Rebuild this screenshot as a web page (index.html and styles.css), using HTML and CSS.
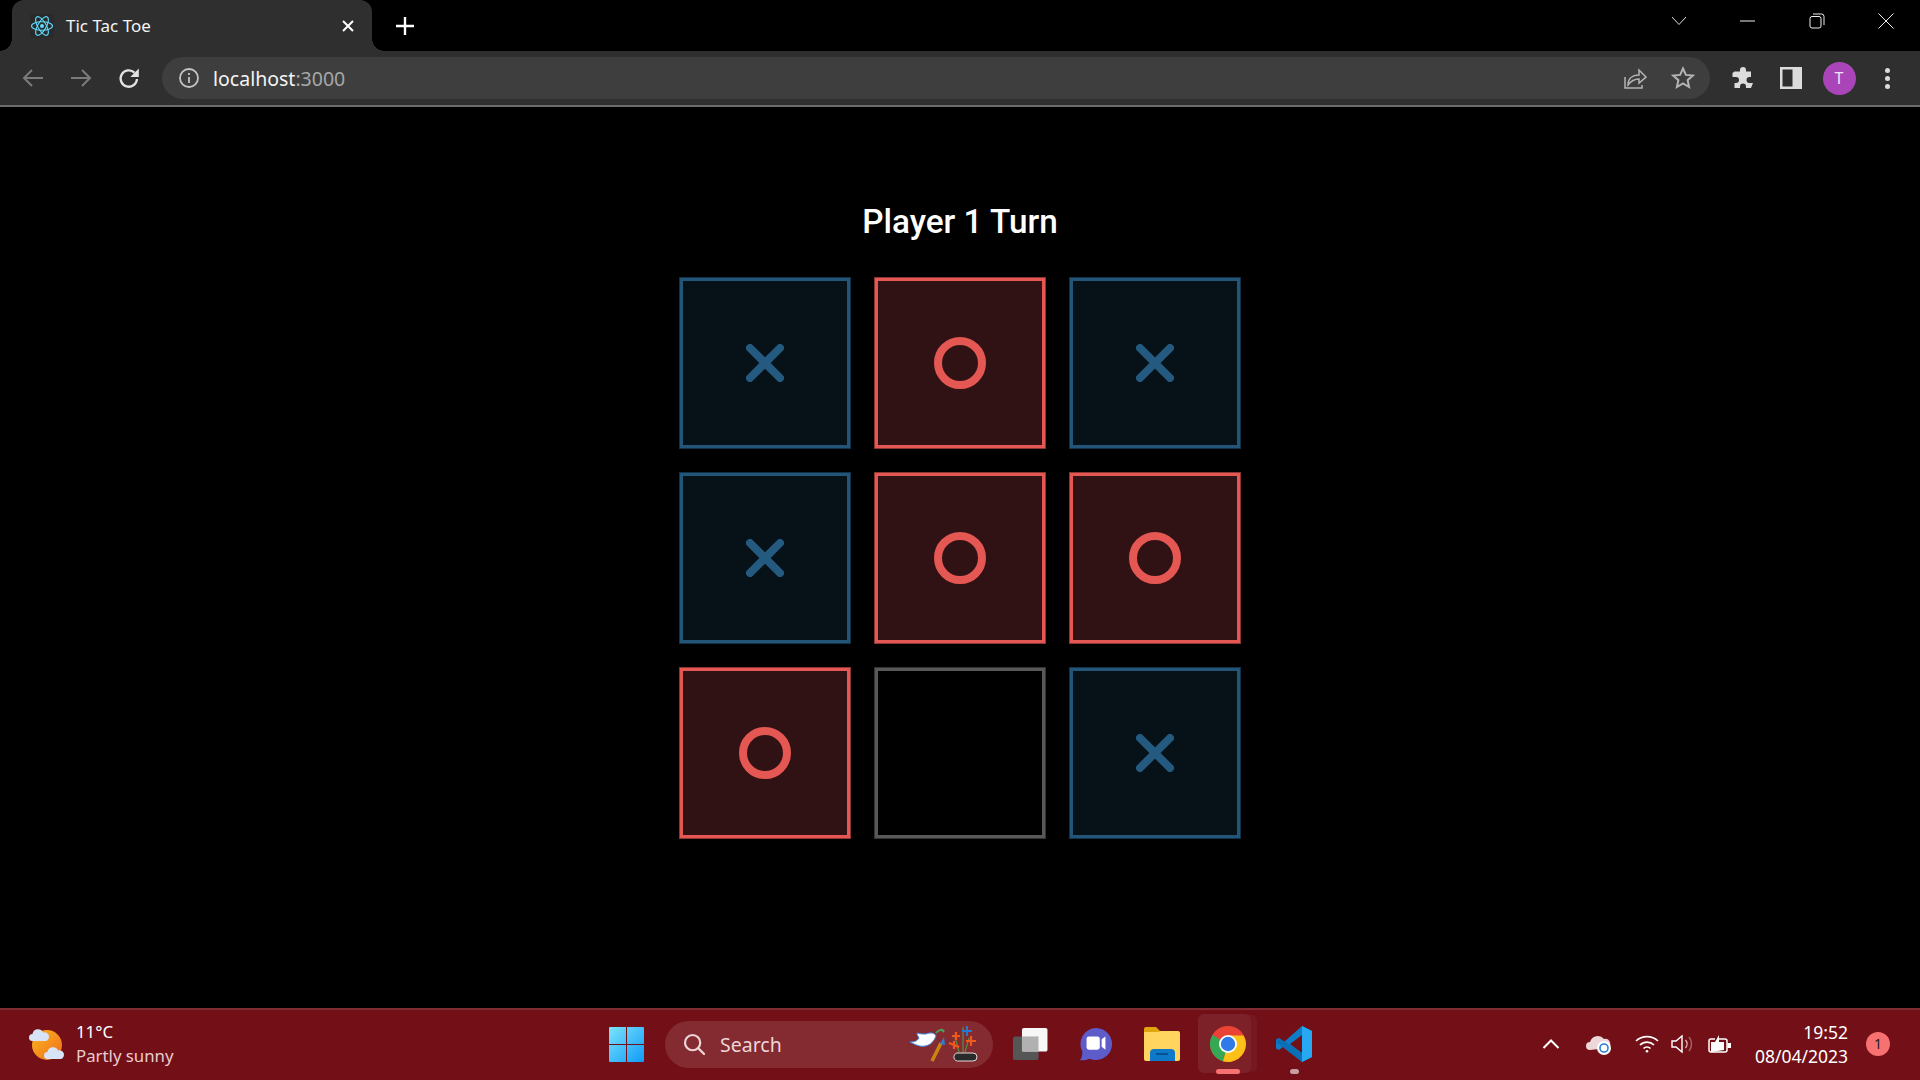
FILE: index.html
```html
<!DOCTYPE html>
<html lang="en">
<head>
<meta charset="utf-8">
<title>Tic Tac Toe</title>
<link rel="stylesheet" href="styles.css">
</head>
<body>
<svg class="defs" width="0" height="0" aria-hidden="true">
  <defs>
    <symbol id="x" viewBox="0 0 38 38"><path d="M4 4 34 34M34 4 4 34" fill="none" stroke="#245a80" stroke-width="8" stroke-linecap="round"/></symbol>
    <symbol id="o" viewBox="0 0 52 52"><circle cx="26" cy="26" r="22" fill="none" stroke="#e55753" stroke-width="8"/></symbol>
  </defs>
</svg>
<div class="screen">
  <header class="tabstrip">
    <div class="tab">
      <span class="favicon">
        <svg width="24" height="24" viewBox="0 0 24 24" fill="none" stroke="#61dafb" stroke-width="1.1"><ellipse cx="12" cy="12" rx="10.5" ry="4.2"/><ellipse cx="12" cy="12" rx="10.5" ry="4.2" transform="rotate(60 12 12)"/><ellipse cx="12" cy="12" rx="10.5" ry="4.2" transform="rotate(120 12 12)"/><circle cx="12" cy="12" r="2" fill="#61dafb" stroke="none"/></svg>
      </span>
      <span class="tab-title">Tic Tac Toe</span>
      <svg class="tab-close" width="12" height="12" viewBox="0 0 12 12"><path d="M1 1 11 11M11 1 1 11" stroke="#fff" stroke-width="2"/></svg>
    </div>
    <svg class="newtab" width="18" height="18" viewBox="0 0 18 18"><path d="M9 0v18M0 9h18" stroke="#fff" stroke-width="2.4"/></svg>
    <div class="grow"></div>
    <div class="winctl">
      <svg width="16" height="10" viewBox="0 0 16 10"><path d="M1 1 8 8.500 15 1" fill="none" stroke="#ddd" stroke-width="1"/></svg>
    </div>
    <div class="winctl">
      <svg width="16" height="2" viewBox="0 0 16 2"><path d="M0 1h15" stroke="#eee" stroke-width="1"/></svg>
    </div>
    <div class="winctl">
      <svg width="16" height="16" viewBox="0 0 16 16" fill="none" stroke="#eee" stroke-width="1"><rect x="1" y="3.500" width="11" height="11.500" rx="2"/><path d="M4 1h8.500A2.500 2.500 0 0 1 15 3.500V12"/></svg>
    </div>
    <div class="winctl">
      <svg width="16" height="16" viewBox="0 0 16 16"><path d="M.5.5 15.500 15.500M15.500.5.500 15.500" stroke="#eee" stroke-width="1"/></svg>
    </div>
  </header>

  <nav class="toolbar">
    <span class="tool"><svg width="22" height="22" viewBox="0 0 22 22" fill="none" stroke="#7b7b7b" stroke-width="2"><path d="M21 11H2M10 3l-8 8 8 8"/></svg></span>
    <span class="tool"><svg width="22" height="22" viewBox="0 0 22 22" fill="none" stroke="#7b7b7b" stroke-width="2"><path d="M1 11h19M12 3l8 8-8 8"/></svg></span>
    <span class="tool"><svg width="22" height="22" viewBox="0 0 22 22" fill="none" stroke="#e2e2e2" stroke-width="2.300"><path d="M19 12a8.200 8.200 0 1 1-2.500-6.400"/><path d="M20.800 1.500v8.500h-8.500z" fill="#e2e2e2" stroke="none"/></svg></span>
    <div class="omnibox">
      <svg class="omni-info" width="22" height="22" viewBox="0 0 22 22" fill="none" stroke="#c4c4c4" stroke-width="1.800"><circle cx="11" cy="11" r="9"/><path d="M11 10v6M11 6v2"/></svg>
      <span class="url">localhost<span class="url-dim">:3000</span></span>
      <div class="grow"></div>
      <span class="tool"><svg width="24" height="24" viewBox="0 0 24 24" fill="none" stroke="#b4b4b4" stroke-width="1.500"><path d="M2 11v11h17v-3"/><path d="M5 19c0-6 4-10 11-10V4l7 7-7 6v-4c-5 0-8 2-11 6z"/></svg></span>
      <span class="tool"><svg width="24" height="24" viewBox="0 0 24 24" fill="none" stroke="#b4b4b4" stroke-width="2"><path d="M12 2.500l2.900 6.400 6.900.7-5.200 4.600 1.500 6.800-6.100-3.500-6.100 3.500 1.500-6.800-5.200-4.600 6.900-.7z"/></svg></span>
    </div>
    <span class="tool first-right"><svg width="24" height="24" viewBox="0 0 24 24" fill="#dcdcdc"><path d="M9 4a3 3 0 0 1 6 0v1.500h5V11h-1.500a3 3 0 0 0 0 6H22l-2 5h-5v-1.500a3 3 0 0 0-6 0V22H3.500v-5H5a3 3 0 0 0 0-6H1.500V7l2-1.500H9z"/></svg></span>
    <span class="tool"><svg width="22" height="22" viewBox="0 0 22 22"><path fill="#dcdcdc" fill-rule="evenodd" d="M0 0h22v22H0zM2.500 2.500v17h10v-17z"/></svg></span>
    <span class="tool"><span class="avatar">T</span></span>
    <span class="tool"><span class="kebab"><i></i><i></i><i></i></span></span>
  </nav>
  <div class="toolbar-rule"></div>

  <main class="page">
    <h1 class="status">Player 1 Turn</h1>
    <div class="board">
      <div class="cell cell-x"><svg class="mark-x"><use href="#x"/></svg></div>
      <div class="cell cell-o"><svg class="mark-o"><use href="#o"/></svg></div>
      <div class="cell cell-x"><svg class="mark-x"><use href="#x"/></svg></div>
      <div class="cell cell-x"><svg class="mark-x"><use href="#x"/></svg></div>
      <div class="cell cell-o"><svg class="mark-o"><use href="#o"/></svg></div>
      <div class="cell cell-o"><svg class="mark-o"><use href="#o"/></svg></div>
      <div class="cell cell-o"><svg class="mark-o"><use href="#o"/></svg></div>
      <div class="cell cell-empty"></div>
      <div class="cell cell-x"><svg class="mark-x"><use href="#x"/></svg></div>
    </div>
  </main>

  <footer class="taskbar">
    <div class="weather">
      <svg width="38" height="34" viewBox="0 0 38 34">
        <defs><linearGradient id="sun" x1="0" y1="0" x2="1" y2="1"><stop offset="0" stop-color="#fcb61f"/><stop offset="1" stop-color="#ef6c1d"/></linearGradient></defs>
        <circle cx="19" cy="18" r="15" fill="url(#sun)"/>
        <path d="M4.500 14a3.500 3.500 0 0 1 0-7A5.500 5.500 0 0 1 15 5.500a4.300 4.300 0 0 1 3 8.500z" fill="#d7e3f7"/>
        <path d="M19.500 32a3.500 3.500 0 0 1 0-7A5.500 5.500 0 0 1 30 23.500a4.300 4.300 0 0 1 3 8.500z" fill="#d7e3f7"/>
      </svg>
      <div class="weather-text">
        <span class="temp">11°C</span>
        <span class="cond">Partly sunny</span>
      </div>
    </div>
    <svg class="winlogo" width="35" height="35" viewBox="0 0 35 35">
      <defs><linearGradient id="win" x1="0" y1="0" x2="1" y2="1"><stop offset="0" stop-color="#7ce3fb"/><stop offset="1" stop-color="#0f9bf8"/></linearGradient></defs>
      <path fill="url(#win)" d="M1 0h16v17H0V1a1 1 0 0 1 1-1zM18 0h16a1 1 0 0 1 1 1v16H18zM0 18h17v17H1a1 1 0 0 1-1-1zM18 18h17v16a1 1 0 0 1-1 1H18z"/>
    </svg>
    <div class="search">
      <svg width="22" height="22" viewBox="0 0 24 24" fill="none" stroke="#eed5d7" stroke-width="2.400"><circle cx="10.500" cy="10.500" r="8.300"/><path d="M16.500 16.500 23 23" stroke-linecap="round"/></svg>
      <span class="search-label">Search</span>
      <div class="grow"></div>
      <svg class="search-art" width="70" height="38" viewBox="0 0 70 38">
        <path d="M1 17c5 0 7-1 9-4-1-2-2-3-2-5 3 1 6 1 9 1 5-2 9-1 10 2-2 5-5 9-11 10-5 1-9-1-15-4z" fill="#fff" stroke="#3e8ce0" stroke-width="1"/>
        <path d="M27 8c2-3 6-4 8-2M32 4l3 3" stroke="#4aa05a" stroke-width="2" fill="none"/>
        <path d="M23 36l9-18" stroke="#c8860f" stroke-width="3.500"/>
        <path d="M31 19l4-7 1 8z" fill="#2a7fd5"/>
        <path d="M54 28V2M50 27 46 12M56 27l4-14" stroke="#5a8a4a" stroke-width="1.200" fill="none"/>
        <path d="M43 11l8 0M47 7l0 8M40 18l10 4M45 16l0 8M57 16h10M62 11v10" stroke="#ef5a1c" stroke-width="2.200"/>
        <path d="M53 6h10M58 1v10" stroke="#2579d2" stroke-width="2"/>
        <path d="M48 28h16a2 2 0 0 1 0 8H50a3 3 0 0 1-2-8z" fill="#2a2a2a" stroke="#ddd" stroke-width="1"/>
      </svg>
    </div>
    <span class="app"><svg width="36" height="34" viewBox="0 0 38 36"><rect x="1" y="10" width="27" height="25" rx="2" fill="#565656"/><rect x="10.500" y="1" width="27" height="25" rx="2" fill="#f7f7f7"/><rect x="10.500" y="10" width="17.500" height="16" fill="#b1b1b1"/></svg></span>
    <span class="app"><svg width="34" height="34" viewBox="0 0 34 36"><path d="M17 1a17 17 0 1 1-7 32.500C7 35 3 35.500 0 35c2-2 2.500-5 2.500-9A17 17 0 0 1 17 1z" fill="#5e5cc9"/><rect x="7" y="10" width="14" height="14" rx="2.500" fill="#fff"/><path d="M23 13l4-3v14l-4-3z" fill="#fff"/></svg></span>
    <span class="app"><svg width="36" height="34" viewBox="0 0 36 34"><path d="M0 2a2 2 0 0 1 2-2h10l4 4h18v8H0z" fill="#dfa70a"/><path d="M0 5h14l3-1h17a2 2 0 0 1 2 2v26a2 2 0 0 1-2 2H2a2 2 0 0 1-2-2z" fill="#ffd45f"/><path d="M6 34V25a4 4 0 0 1 4-3h17a4 4 0 0 1 4 3v9z" fill="#0f79c9"/><path d="M12 27h12" stroke="#06477e" stroke-width="1.500"/></svg></span>
    <span class="app app-active">
      <svg width="36" height="36" viewBox="0 0 36 36">
        <circle cx="18" cy="18" r="18" fill="#ea4335"/>
        <path d="M18 18 2.400 9A18 18 0 0 0 13 35.300z" fill="#34a853"/>
        <path d="M18 18h17.900A18 18 0 0 1 13 35.300z" fill="#fbc116"/>
        <path d="M18 9.500h15.500A18 18 0 0 1 36 18H26z" fill="#fbc116"/>
        <circle cx="18" cy="18" r="9" fill="#fff"/><circle cx="18" cy="18" r="7.200" fill="#2f79e8"/>
      </svg>
    </span>
    <span class="app app-running">
      <svg width="36" height="36" viewBox="0 0 36 36">
        <path d="M26 0 36 5v26l-10 5L8 20 3 24 0 22.500v-9L3 12l5 4z" fill="#0c7dc6"/>
        <path d="M26 0 36 5v26l-10 5z" fill="#26a9f2"/>
        <path d="M26 9 14 18l12 9z" fill="#720f17"/>
        <path d="M3 12 26 27v9L0 16z" fill="#0a6fb5"/>
      </svg>
    </span>
    <div class="grow"></div>
    <div class="tray">
      <svg class="tray-chev" width="18" height="10" viewBox="0 0 18 10"><path d="M1.500 9 9 1.500 16.500 9" fill="none" stroke="#fff" stroke-width="2"/></svg>
      <svg class="tray-cloud" width="26" height="22" viewBox="0 0 26 22"><path d="M4 17a4 4 0 0 1 0-8A8 8 0 0 1 18 6a5 5 0 0 1 4 9z" fill="#ecd7d9"/><circle cx="18" cy="15" r="7" fill="#fff"/><circle cx="18" cy="15" r="4" fill="none" stroke="#2b7fd6" stroke-width="1.600"/></svg>
      <svg class="tray-wifi" width="24" height="18" viewBox="0 0 24 18" fill="none" stroke="#fff" stroke-width="1.700"><path d="M1 6a16 16 0 0 1 22 0M5 10a10 10 0 0 1 14 0M8.500 13.500a5 5 0 0 1 7 0"/><circle cx="12" cy="16.200" r="1.300" fill="#fff" stroke="none"/></svg>
      <svg class="tray-vol" width="24" height="20" viewBox="0 0 24 20" fill="none" stroke="#fff" stroke-width="1.400"><path d="M1 7v6h4l6 5V2L5 7z"/><path d="M14.500 6a6 6 0 0 1 0 8" stroke="#e0b8bb"/><path d="M18 3a11 11 0 0 1 0 14" stroke="#a5676d"/></svg>
      <svg class="tray-batt" width="24" height="20" viewBox="0 0 24 20" fill="none" stroke="#fff" stroke-width="1.500"><path d="M7 5H3a2 2 0 0 0-2 2v9a2 2 0 0 0 2 2h14a2 2 0 0 0 2-2V7a2 2 0 0 0-2-2h-6"/><path d="M19.500 9H23v5h-3.500" fill="#fff" stroke="none"/><path d="M3 18V8h4l4-7v7h5v8z" fill="#fff" stroke="none"/></svg>
      <div class="clock"><span>19:52</span><span>08/04/2023</span></div>
      <span class="notif">1</span>
    </div>
  </footer>
</div>
</body>
</html>
```

FILE: styles.css
```css
* { box-sizing: border-box; }
html, body { margin: 0; height: 100%; background: #000; overflow: hidden; }
body { font-family: "Noto Sans", "Open Sans", sans-serif; color: #fff; }
.defs { position: absolute; }
.screen { height: 1080px; display: flex; flex-direction: column; }
.grow { flex: 1; }

/* tab strip */
.tabstrip { height: 51px; flex: none; display: flex; align-items: center; padding-left: 12px; background: #000; }
.tab { position: relative; width: 360px; height: 51px; display: flex; align-items: center; padding: 0 18px; background: #2f2f2f; border-radius: 12px 12px 0 0; }
.tab::before, .tab::after { content: ""; position: absolute; bottom: 0; width: 12px; height: 12px; }
.tab::before { left: -12px; background: radial-gradient(circle at 0 0, #000 11.500px, #2f2f2f 12px); }
.tab::after { right: -12px; background: radial-gradient(circle at 100% 0, #000 11.500px, #2f2f2f 12px); }
.favicon { width: 24px; height: 24px; background: #282a2c; border-radius: 2px; display: flex; }
.tab-title { margin-left: 12px; font-size: 17px; line-height: 24px; color: #f4f4f4; }
.tab-close { margin-left: auto; }
.newtab { margin-left: 24px; }
.winctl { width: 69px; height: 42px; display: flex; align-items: center; justify-content: center; margin-top: -9px; }

/* toolbar */
.toolbar { height: 54px; flex: none; background: #2f2f2f; display: flex; align-items: center; padding: 0 9px; }
.toolbar-rule { height: 2px; flex: none; background: #6c6c6c; }
.tool { width: 48px; height: 42px; flex: none; display: flex; align-items: center; justify-content: center; }
.omnibox { flex: 1; margin-left: 9px; height: 42px; display: flex; align-items: center; padding: 0 3px 0 16px; background: #3e3e3e; border-radius: 21px; }
.url { margin-left: 13px; padding-top: 2px; font-size: 19.500px; line-height: 24px; color: #f4f4f4; }
.url-dim { color: #a8a8a8; }
.first-right { margin-left: 9px; }
.avatar { width: 33px; height: 33px; border-radius: 50%; background: #a945b8; font-size: 16px; line-height: 33px; text-align: center; color: #f2e4f5; }
.kebab { display: flex; flex-direction: column; gap: 3px; }
.kebab i { width: 5px; height: 5px; border-radius: 50%; background: #dcdcdc; }

/* page */
.page { flex: 1; display: flex; flex-direction: column; align-items: center; background: #000; padding-top: 94px; }
.status { margin: 0; font-family: Roboto, sans-serif; font-weight: 500; font-size: 33.300px; line-height: 42px; color: #fff; }
.board { margin-top: 35px; display: grid; grid-template-columns: repeat(3, 170px); grid-auto-rows: 170px; gap: 25px; }
.cell { display: flex; align-items: center; justify-content: center; border: 3px solid #555; }
.cell-x { background: #061118; border-color: #235578; box-shadow: 0 0 0 1px #133248; }
.cell-o { background: #311214; border-color: #e55753; box-shadow: 0 0 0 1px #8a3634; }
.cell-empty { background: #000; border-color: #585858; box-shadow: 0 0 0 1px #333; }
.mark-x { width: 38px; height: 38px; }
.mark-o { width: 52px; height: 52px; }

/* taskbar */
.taskbar { height: 72px; flex: none; display: flex; align-items: center; background: #720f17; border-top: 2px solid #7f2c33; padding: 0 0 2px 28px; }
.weather { width: 581px; flex: none; display: flex; align-items: center; gap: 10px; }
.weather-text { display: flex; flex-direction: column; font-size: 16.800px; line-height: 24px; }
.temp { color: #fff; }
.cond { color: #e9ccce; }
.winlogo { flex: none; }
.search { margin-left: 21px; width: 328px; height: 47px; flex: none; display: flex; align-items: center; padding: 0 14px 0 18px; background: #842b32; border-radius: 24px; }
.search-label { margin-left: 15px; font-size: 19.500px; color: #eed5d7; }
.search-art { flex: none; }
.search + .app { margin-left: 4px; }
.app { position: relative; width: 66px; height: 60px; flex: none; display: flex; align-items: center; justify-content: center; }
.app-active::before { content: ""; position: absolute; left: 3px; top: 0; width: 53px; height: 59px; background: rgba(255,255,255,.08); border-radius: 6px; box-shadow: 7px 0 0 -1px rgba(255,255,255,.04); }
.app-active::after { content: ""; position: absolute; left: 21px; bottom: 0; width: 24px; height: 5px; background: #f87171; border-radius: 3px; }
.app-active svg, .app-running svg { position: relative; }
.app-running::after { content: ""; position: absolute; left: 29px; bottom: 0; width: 9px; height: 5px; background: #c99ea2; border-radius: 3px; }
.tray { display: flex; align-items: center; padding-right: 30px; }
.tray-chev { margin-right: 26px; }
.tray-cloud { margin-right: 23px; }
.tray-wifi { margin-right: 12px; }
.tray-vol { margin-right: 13px; }
.tray-batt { margin-right: -2px; }
.clock { width: 118px; display: flex; flex-direction: column; align-items: flex-end; font-size: 17.500px; line-height: 24px; color: #fff; }
.notif { margin-left: 18px; width: 24px; height: 24px; border-radius: 50%; background: #f87171; color: #1e1e1e; font-size: 14px; line-height: 24px; text-align: center; }
```
